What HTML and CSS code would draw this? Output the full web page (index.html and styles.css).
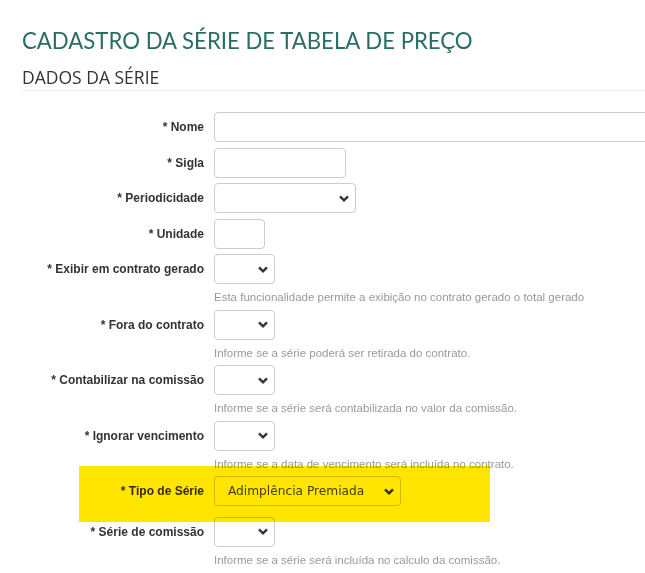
FILE: index.html
```html
<!DOCTYPE html>
<html lang="pt-BR">
<head>
	<meta charset="UTF-8">
	<title>Cadastro da Série de Tabela de Preço</title>
	<link rel="stylesheet" href="styles.css">
</head>
<body>
	<div class="page">
		<h1 class="title">CADASTRO DA SÉRIE DE TABELA DE PREÇO</h1>
		<h2 class="section">DADOS DA SÉRIE</h2>

		<form class="form">
			<div class="row">
				<label>* Nome</label>
				<div class="field"><input type="text" class="inp inp-full"></div>
			</div>
			<div class="row">
				<label>* Sigla</label>
				<div class="field"><input type="text" class="inp inp-sigla"></div>
			</div>
			<div class="row">
				<label>* Periodicidade</label>
				<div class="field"><select class="inp sel sel-period"><option></option></select></div>
			</div>
			<div class="row">
				<label>* Unidade</label>
				<div class="field"><input type="text" class="inp inp-unit"></div>
			</div>
			<div class="row">
				<label>* Exibir em contrato gerado</label>
				<div class="field">
					<select class="inp sel sel-small"><option></option></select>
					<p class="hint">Esta funcionalidade permite a exibição no contrato gerado o total gerado</p>
				</div>
			</div>
			<div class="row">
				<label>* Fora do contrato</label>
				<div class="field">
					<select class="inp sel sel-small"><option></option></select>
					<p class="hint">Informe se a série poderá ser retirada do contrato.</p>
				</div>
			</div>
			<div class="row">
				<label>* Contabilizar na comissão</label>
				<div class="field">
					<select class="inp sel sel-small"><option></option></select>
					<p class="hint">Informe se a série será contabilizada no valor da comissão.</p>
				</div>
			</div>
			<div class="row">
				<label>* Ignorar vencimento</label>
				<div class="field">
					<select class="inp sel sel-small"><option></option></select>
					<p class="hint">Informe se a data de vencimento será incluída no contrato.</p>
				</div>
			</div>
			<div class="row marked">
				<label>* Tipo de Série</label>
				<div class="field"><select class="inp sel sel-tipo"><option>Adimplência Premiada</option></select></div>
				<div class="marker"></div>
			</div>
			<div class="row">
				<label>* Série de comissão</label>
				<div class="field">
					<select class="inp sel sel-small"><option></option></select>
					<p class="hint">Informe se a série será incluída no calculo da comissão.</p>
				</div>
			</div>
		</form>
	</div>
</body>
</html>
```

FILE: styles.css
```css
*{
	margin:0;
	padding:0;
	box-sizing:border-box;
}
body{
	background:#fff;
	font-family:"Liberation Sans",Arial,sans-serif;
	color:#333;
	overflow:hidden;
}
.page{
	padding-top:27px;
}
.title{
	font-family:Lato,"Open Sans",sans-serif;
	font-size:22.2px;
	font-weight:normal;
	color:#2b6d65;
	line-height:28px;
	padding-left:22px;
}
.section{
	font-family:"Open Sans",sans-serif;
	font-size:17.5px;
	font-weight:normal;
	color:#333;
	line-height:20px;
	margin:12px 0 0 21px;
	padding:0 0 3px 1px;
	border-bottom:1px solid #eee;
}
.form{
	margin-top:21px;
	display:flex;
	flex-direction:column;
	gap:5.5px;
}
.row{
	display:grid;
	grid-template-columns:204px 1fr;
	column-gap:10px;
	position:relative;
}
.row label{
	font-size:12px;
	font-weight:bold;
	text-align:right;
	line-height:30px;
	height:30px;
	position:relative;
	z-index:1;
}
.field{
	position:relative;
	z-index:1;
}
.inp{
	display:block;
	height:30px;
	border:1px solid #ccc;
	border-radius:4px;
	background:transparent;
	font-family:"DejaVu Sans",sans-serif;
	font-size:12px;
	color:#555;
	outline:none;
}
.inp-full{
	width:440px;
}
.inp-sigla{
	width:132px;
}
.inp-unit{
	width:51px;
}
.sel{
	appearance:none;
	-webkit-appearance:none;
	padding:0 24px 0 12px;
	background-image:url("data:image/svg+xml,%3Csvg xmlns='http://www.w3.org/2000/svg' width='10' height='7' viewBox='0 0 10 7'%3E%3Cpath d='M1 1.3l4 4 4-4' fill='none' stroke='%23333' stroke-width='2.4'/%3E%3C/svg%3E");
	background-repeat:no-repeat;
	background-position:right 6px center;
}
.sel-period{
	width:142px;
}
.sel-small{
	width:61px;
}
.sel-tipo{
	width:187px;
	color:#444;
	font-size:12.2px;
	padding-left:13px;
}
.hint{
	font-size:11.5px;
	color:#999;
	line-height:13px;
	padding-top:7px;
}
.marked{
	margin-bottom:5px;
}
.marker{
	position:absolute;
	left:79px;
	top:-10px;
	width:411px;
	height:56px;
	background:#ffe500;
	mix-blend-mode:multiply;
	z-index:2;
	pointer-events:none;
}
```
